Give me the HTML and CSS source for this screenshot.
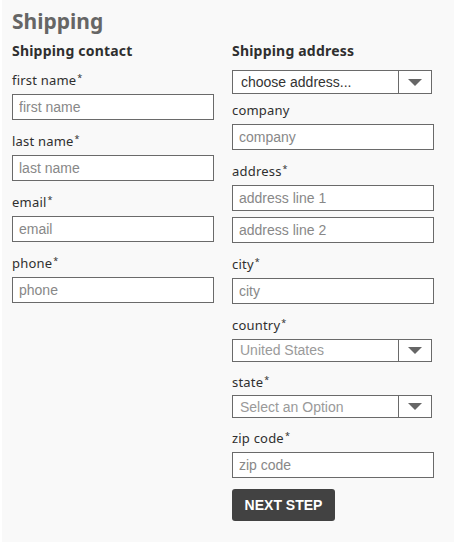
FILE: index.html
```html
<!DOCTYPE html>
<html>
<head>
<meta charset="utf-8">
<link rel="stylesheet" href="styles.css">
</head>
<body>
<div class="page">
  <h1 class="title">Shipping</h1>
  <div class="columns">
    <div class="col">
      <h2 class="heading">Shipping contact</h2>
      <div class="field">
        <label class="label">first name<span class="req">*</span></label>
        <input class="input" type="text" placeholder="first name">
      </div>
      <div class="field">
        <label class="label">last name<span class="req">*</span></label>
        <input class="input" type="text" placeholder="last name">
      </div>
      <div class="field">
        <label class="label">email<span class="req">*</span></label>
        <input class="input" type="text" placeholder="email">
      </div>
      <div class="field">
        <label class="label">phone<span class="req">*</span></label>
        <input class="input" type="text" placeholder="phone">
      </div>
    </div>
    <div class="col">
      <h2 class="heading">Shipping address</h2>
      <div class="select select-choose">
        <span class="select-text dark">choose address...</span>
        <span class="select-arrow"><svg width="14" height="7" viewBox="0 0 14 7"><polygon points="0,0 14,0 7,7" fill="#666"/></svg></span>
      </div>
      <div class="field">
        <label class="label">company</label>
        <input class="input" type="text" placeholder="company">
      </div>
      <div class="field">
        <label class="label">address<span class="req">*</span></label>
        <input class="input input-stack" type="text" placeholder="address line 1">
        <input class="input" type="text" placeholder="address line 2">
      </div>
      <div class="field">
        <label class="label">city<span class="req">*</span></label>
        <input class="input" type="text" placeholder="city">
      </div>
      <div class="field field-select">
        <label class="label">country<span class="req">*</span></label>
        <div class="select">
          <span class="select-text">United States</span>
          <span class="select-arrow"><svg width="14" height="7" viewBox="0 0 14 7"><polygon points="0,0 14,0 7,7" fill="#666"/></svg></span>
        </div>
      </div>
      <div class="field field-select">
        <label class="label">state<span class="req">*</span></label>
        <div class="select">
          <span class="select-text">Select an Option</span>
          <span class="select-arrow"><svg width="14" height="7" viewBox="0 0 14 7"><polygon points="0,0 14,0 7,7" fill="#666"/></svg></span>
        </div>
      </div>
      <div class="field">
        <label class="label">zip code<span class="req">*</span></label>
        <input class="input" type="text" placeholder="zip code">
      </div>
      <button class="btn" type="button">NEXT STEP</button>
    </div>
  </div>
</div>
</body>
</html>
```

FILE: styles.css
```css
* { box-sizing: border-box; }
html, body { margin: 0; padding: 0; background: #ffffff; }
.page {
  margin: 0 2px 2px 2px;
  min-height: 542px;
  background: #f9f9f9;
  padding: 9px 0 0 10px;
  font-family: "Noto Sans", "DejaVu Sans", sans-serif;
  color: #333;
}
.title {
  margin: 0 0 9px 0;
  font-size: 21px;
  line-height: 24px;
  font-weight: 700;
  color: #666;
}
.columns {
  display: flex;
  gap: 18px;
}
.col {
  width: 202px;
  display: flex;
  flex-direction: column;
  align-items: flex-start;
}
.heading {
  margin: 0 0 10px 0;
  font-size: 14px;
  line-height: 18px;
  font-weight: 700;
  letter-spacing: 0.2px;
  color: #2f2f2f;
}
.field {
  display: flex;
  flex-direction: column;
  margin-bottom: 11.5px;
}
.field-select { margin-bottom: 10px; }
.label {
  display: block;
  font-size: 13px;
  line-height: 20px;
  margin-bottom: 3.5px;
  letter-spacing: 0.2px;
  color: #2f2f2f;
}
.req {
  font-size: 9px;
  vertical-align: top;
  line-height: 15px;
  margin-left: 1px;
}
.input {
  display: block;
  width: 202px;
  height: 26px;
  margin: 0;
  padding: 0 6px;
  border: 1px solid #6a6a6a;
  border-radius: 0;
  background: #fff;
  font-family: "Liberation Sans", Arial, sans-serif;
  font-size: 14px;
  color: #333;
  outline: none;
}
.input::placeholder { color: #888; opacity: 1; }
.input-stack { margin-bottom: 6px; }
.select {
  display: flex;
  width: 200px;
  height: 23px;
  border: 1px solid #6a6a6a;
  background: #fff;
  font-family: "Liberation Sans", Arial, sans-serif;
  font-size: 14px;
}
.select-choose { height: 24px; margin-bottom: 6px; }
.select-text {
  flex: 1;
  padding-left: 7px;
  display: flex;
  align-items: center;
  color: #9a9a9a;
}
.select-text.dark { color: #333; padding-left: 8px; }
.select-arrow {
  width: 33px;
  border-left: 1px solid #6a6a6a;
  display: flex;
  align-items: center;
  justify-content: center;
}
.select-arrow svg { display: block; }
.btn {
  margin-top: 0;
  width: 103px;
  height: 32px;
  border: none;
  border-radius: 3px;
  background: #424242;
  color: #fff;
  font-family: "Liberation Sans", Arial, sans-serif;
  font-weight: 700;
  font-size: 14px;
  padding: 0;
  cursor: pointer;
}
```
